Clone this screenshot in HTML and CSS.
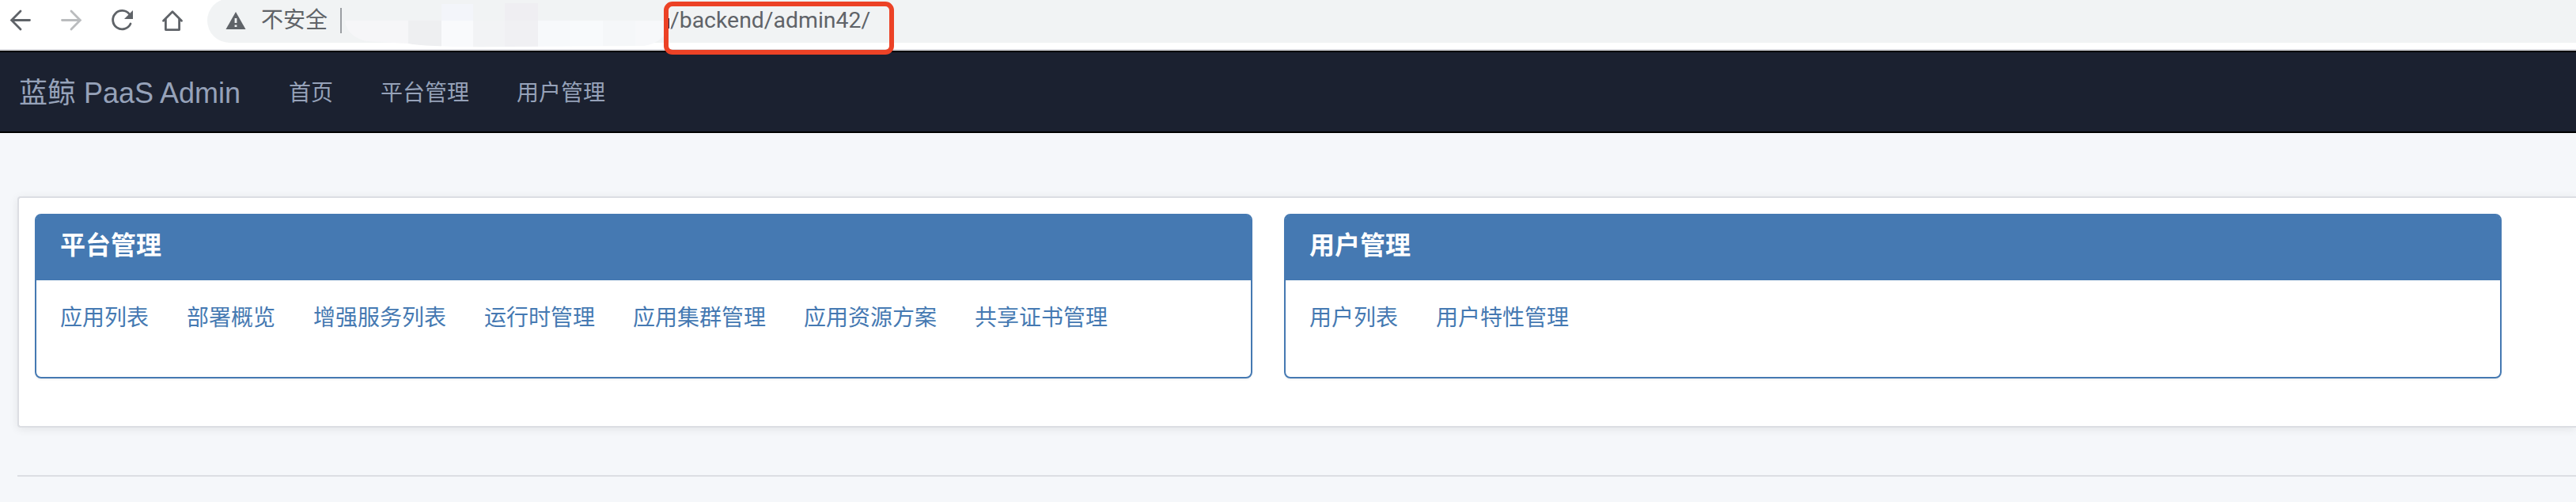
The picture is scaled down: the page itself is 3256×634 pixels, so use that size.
FILE: index.html
```html
<!DOCTYPE html>
<html lang="zh-CN">
<head>
<meta charset="utf-8">
<title>蓝鲸 PaaS Admin</title>
<link rel="stylesheet" href="styles.css">
</head>
<body>
<div class="toolbar">
  <svg class="tool-icons" width="262" height="62" viewBox="0 0 262 62" fill="none" stroke="#5f6368" stroke-width="2.8" stroke-linecap="round">
    <path d="M37.5 25.5H15M26 14L14.6 25.5L26 37"/>
    <path stroke="#babcbe" d="M78.500 25.500H101M90 14L101.400 25.500L90 37"/>
    <path d="M163.600 18A11.700 11.700 0 1 0 165 30"/>
    <path fill="#5f6368" stroke="none" d="M168 13V24H157Z"/>
    <path stroke-linejoin="round" d="M206.500 26.200L218 14.800L229.500 26.200M209.400 24V37.600H226.600V24"/>
  </svg>
  <div class="omnibox">
    <svg class="warn" width="26" height="24" viewBox="0 0 26 24"><path fill="#5f6368" d="M13 1L25.5 23H.5Z"/><path fill="#f1f3f4" d="M11.6 9H14.4V15H11.6ZM11.6 17.4H14.4V20H11.6Z"/></svg>
    <span class="insecure">不安全</span>
    <span class="divider"></span>
    <span class="url">/backend/admin42/</span>
  </div>
  <svg class="mosaic" width="412" height="60" viewBox="436 0 412 60">
    <clipPath id="blob"><path d="M436 22Q438 4 460 0H848V35Q832 58 810 58L640 59Q540 60 516 55L462 52Q438 45 436 26Z"/></clipPath>
    <g clip-path="url(#blob)">
      <path fill="#f1f3f4" d="M436 0H848V26H436Z"/>
      <path fill="#f6f6f8" d="M436 26H516V60H436Z"/>
      <path fill="#eeeff1" d="M516 26H558V60H516Z"/>
      <path fill="#f3f5fa" d="M558 5H598V26H558Z"/>
      <path fill="#f9fafc" d="M558 26H598V60H558Z"/>
      <path fill="#f2f3f5" d="M598 26H638V60H598Z"/>
      <path fill="#efeef2" d="M638 4H680V26H638Z"/>
      <path fill="#f0f0f3" d="M638 26H680V60H638Z"/>
      <path fill="#f7f9fb" d="M680 26H721V60H680Z"/>
      <path fill="#f8fafc" d="M721 26H762V60H721Z"/>
      <path fill="#f5f7f9" d="M762 26H803V60H762Z"/>
      <path fill="#f7f8fa" d="M803 26H848V60H803Z"/>
    </g>
    <path fill="#1f2340" d="M844 23H846V36H844Z"/>
  </svg>
  <div class="highlight"></div>
</div>
<nav class="navbar">
  <a class="brand">蓝鲸 PaaS Admin</a>
  <a class="nav-link">首页</a>
  <a class="nav-link">平台管理</a>
  <a class="nav-link">用户管理</a>
</nav>
<main class="content">
  <section class="board">
    <div class="card">
      <h3 class="card-title">平台管理</h3>
      <div class="links">
        <a>应用列表</a><a>部署概览</a><a>增强服务列表</a><a>运行时管理</a><a>应用集群管理</a><a>应用资源方案</a><a>共享证书管理</a>
      </div>
    </div>
    <div class="card">
      <h3 class="card-title">用户管理</h3>
      <div class="links"><a>用户列表</a><a>用户特性管理</a></div>
    </div>
  </section>
  <hr class="rule">
</main>
</body>
</html>
```
FILE: styles.css
```css
* { box-sizing: border-box; }
body {
  margin: 0;
  height: 634px;
  overflow: hidden;
  background: #f5f7fa;
  font-family: "Liberation Sans", "Noto Sans CJK SC", sans-serif;
  font-size: 28px;
}
.toolbar {
  position: relative;
  display: flex;
  height: 64px;
  background: #fff;
  border-bottom: 2px solid #dadbdf;
}
.tool-icons { flex: none; }
.omnibox {
  flex: 1;
  display: flex;
  align-items: center;
  height: 56px;
  margin-top: -2px;
  padding-left: 23px;
  background: #f1f3f4;
  border-radius: 28px 0 0 28px;
  color: #5f6368;
  white-space: nowrap;
}
.warn { margin-right: 19px; }
.insecure { width: 84px; line-height: 40px; }
.divider {
  width: 2px;
  height: 32px;
  margin-left: 16px;
  background: #9b9ea2;
}
.url {
  margin-left: 415px;
  font-family: Roboto, sans-serif;
  font-size: 28.4px;
  line-height: 40px;
}
.mosaic { position: absolute; left: 436px; top: 0; }
.highlight {
  position: absolute;
  left: 839px;
  top: 2px;
  width: 291px;
  height: 67px;
  border: 6px solid #ec4226;
  border-radius: 11px;
}
.navbar {
  display: flex;
  align-items: center;
  gap: 60px;
  height: 104px;
  padding: 0 0 3px 24px;
  background: #1b2130;
  border-top: 2px solid #000;
  border-bottom: 2px solid #000;
  color: #96a2b9;
  white-space: nowrap;
}
.brand {
  width: 281px;
  padding-bottom: 1px;
  font-size: 36px;
}
.content { padding: 80px 0 0 22px; }
.board {
  display: flex;
  align-items: flex-start;
  gap: 40px;
  height: 292px;
  padding: 20px;
  background: #fff;
  border: 2px solid #dcdee3;
  border-right: 0;
  border-radius: 4px 0 0 4px;
  box-shadow: 0 2px 12px rgba(0, 0, 0, .08);
}
.card {
  width: 1539px;
  height: 208px;
  border: 2px solid #4579b2;
  border-radius: 8px;
  box-shadow: 0 2px 2px rgba(0, 0, 0, .05);
}
.card-title {
  height: 82px;
  margin: 0;
  padding: 19px 30px;
  background: #4579b2;
  border-radius: 5px 5px 0 0;
  color: #fff;
  font-size: 32px;
  line-height: 38px;
}
.links {
  display: flex;
  gap: 48px;
  padding: 28px 30px;
  color: #4579b2;
  line-height: 40px;
}
.rule {
  height: 2px;
  margin: 60px 0 0;
  border: 0;
  background: #dcdee3;
}
```
